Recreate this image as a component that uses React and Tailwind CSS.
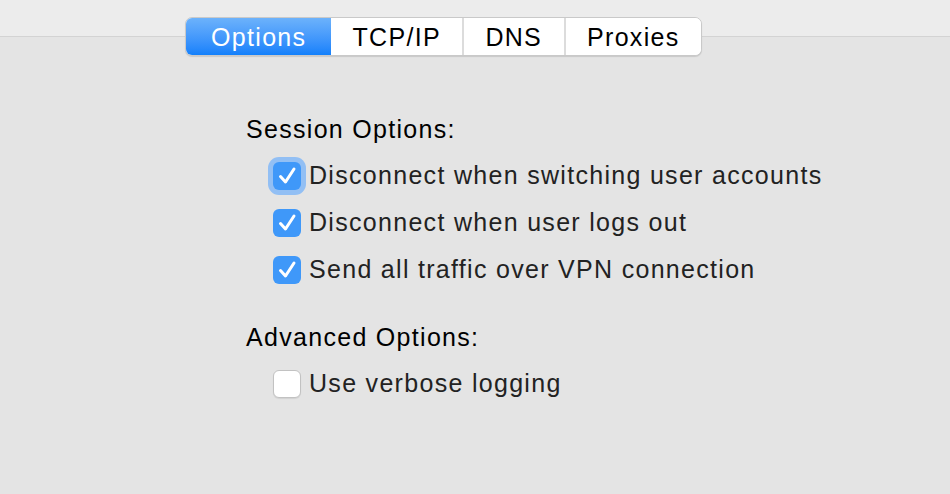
import React from "react";

const font = { fontFamily: '"Liberation Sans", Arial, sans-serif' };

function Check() {
  return (
    <svg width="28" height="28" viewBox="0 0 28 28" className="block">
      <path d="M7.5 14.5 L12.5 20 L21 7" fill="none" stroke="#fff" strokeWidth="3" strokeLinecap="round" strokeLinejoin="round" />
    </svg>
  );
}

function Row({ checked, focused, label }) {
  return (
    <div className="flex items-center h-[47px] pl-[27px]">
      {checked ? (
        <div
          className={
            "w-[28px] h-[28px] rounded-[6px] bg-[#3f98f9] " +
            (focused ? "shadow-[0_0_0_5px_#92bff4]" : "")
          }
        >
          <Check />
        </div>
      ) : (
        <div className="w-[28px] h-[28px] rounded-[6px] bg-white border border-[#c2c2c2] shadow-[0_1px_1px_rgba(0,0,0,0.08)]" />
      )}
      <span className="ml-[8px] text-[25px] tracking-[1.3px] text-[#222] leading-none">{label}</span>
    </div>
  );
}

export default function App() {
  const tabs = [
    { label: "Options", w: "w-[146px]", active: true },
    { label: "TCP/IP", w: "w-[131px]" },
    { label: "DNS", w: "w-[102px]" },
    { label: "Proxies", w: "w-[138px]" },
  ];
  return (
    <div className="w-[950px] h-[494px] bg-[#e4e4e4] overflow-hidden" style={font}>
      <div className="h-[37px] bg-[#ececec] border-b border-[#d3d3d3]" />
      <div className="-mt-[20px] ml-[185px] flex h-[39px] w-[517px] rounded-[7px] bg-white border border-[#c9c9c9] shadow-[0_1px_1px_rgba(0,0,0,0.12)] overflow-hidden">
        {tabs.map((t, i) => (
          <div
            key={t.label}
            className={
              "flex items-center justify-center text-[25px] tracking-[1.3px] leading-none pt-[1px] " +
              t.w +
              (t.active
                ? " bg-gradient-to-b from-[#6cb2fb] to-[#1180fb] text-white"
                : " text-black bg-white") +
              (i > 1 ? " border-l-2 border-[#dcdcdc]" : "")
            }
          >
            {t.label}
          </div>
        ))}
      </div>
      <div className="pl-[246px]">
        <div className="mt-[58px] h-[30px] flex items-center text-[25px] tracking-[1.3px] text-black leading-none">Session Options:</div>
        <div className="mt-[8px]">
          <Row checked focused label="Disconnect when switching user accounts" />
          <Row checked label="Disconnect when user logs out" />
          <Row checked label="Send all traffic over VPN connection" />
        </div>
        <div className="mt-[29px] h-[30px] flex items-center text-[25px] tracking-[1.3px] text-black leading-none">Advanced Options:</div>
        <div className="mt-[8px]">
          <Row label="Use verbose logging" />
        </div>
      </div>
    </div>
  );
}
